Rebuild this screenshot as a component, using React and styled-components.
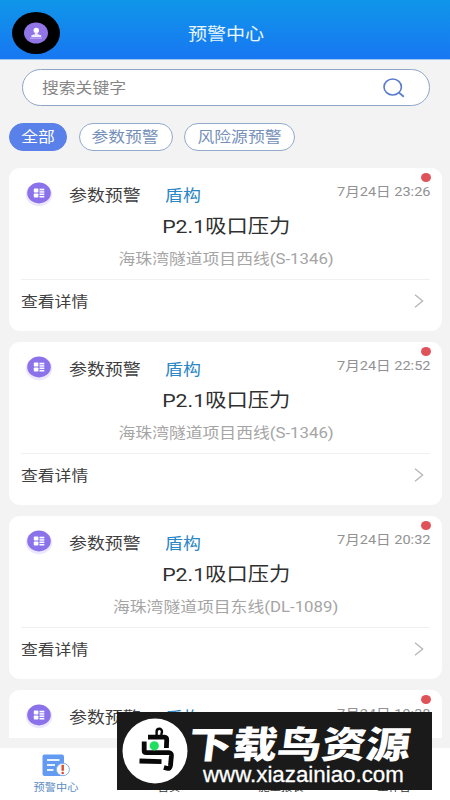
import React from 'react';
import styled, { createGlobalStyle } from 'styled-components';

const alerts = [
	{ id: 1, time: '7月24日 23:26', project: '海珠湾隧道项目西线(S-1346)' },
	{ id: 2, time: '7月24日 22:52', project: '海珠湾隧道项目西线(S-1346)' },
	{ id: 3, time: '7月24日 20:32', project: '海珠湾隧道项目东线(DL-1089)' },
	{ id: 4, time: '7月24日 19:38', project: '海珠湾隧道项目西线(S-1346)' },
];

const filters = [
	{ label: '全部', width: 58, active: true },
	{ label: '参数预警', width: 94 },
	{ label: '风险源预警', width: 111 },
];

const tabs = ['预警中心', '首页', '施工报表', '工作台'];

const UserIcon = () => (
	<svg width="48" height="42" viewBox="0 0 48 42">
		<ellipse cx="24" cy="21" rx="24" ry="21" fill="#000" />
		<ellipse cx="24" cy="21" rx="12" ry="10.6" fill="#9175e6" />
		<ellipse cx="24.3" cy="18.4" rx="2.7" ry="2.7" fill="#fff" />
		<path d="M23 20h2.6v2.2l3.6 1.1v1.8H19.4v-1.8l3.6-1.1z" fill="#efeafd" />
		<path d="M18 26.1h12" stroke="#c6b8f5" strokeWidth="1" />
	</svg>
);

const SearchIcon = () => (
	<svg width="22" height="20" viewBox="0 0 22 20" fill="none" stroke="#5a7bc9" strokeWidth="1.6">
		<ellipse cx="9.7" cy="9" rx="8.7" ry="8" />
		<path d="M15.7 14.4l5.1 4.3" strokeWidth="1.8" />
	</svg>
);

const GridIcon = () => (
	<svg width="30" height="27" viewBox="0 0 30 27">
		<ellipse cx="15" cy="13.5" rx="13.2" ry="11.7" fill="#ece7fd" />
		<ellipse cx="15" cy="12" rx="11.8" ry="10.4" fill="#8b72ea" />
		<g fill="#fff">
			<rect x="9.8" y="7.6" width="4.6" height="4" rx="0.8" />
			<rect x="9.8" y="12.5" width="4.6" height="4" rx="0.8" />
			<rect x="15.5" y="7.7" width="4.8" height="1.7" />
			<rect x="15.5" y="10.2" width="4.8" height="1.5" />
			<rect x="15.5" y="12.5" width="4.8" height="1.5" />
			<rect x="15.5" y="14.9" width="4.8" height="1.6" />
		</g>
	</svg>
);

const ChevronIcon = () => (
	<svg width="10" height="14" viewBox="0 0 10 14" fill="none" stroke="#b9b9b9" strokeWidth="1.4">
		<path d="M1 0.8l7.6 6.2L1 13.2" />
	</svg>
);

const AlertTabIcon = () => (
	<svg width="28" height="23" viewBox="0 0 28 23">
		<rect x="0.5" y="0.5" width="21.5" height="21.5" rx="2" fill="#639bf3" />
		<path d="M5 6h12.5M5 11h8M5 16h6.5" stroke="#e9f2ff" strokeWidth="1.9" />
		<ellipse cx="20.9" cy="15.5" rx="6.5" ry="6.2" fill="#fff" stroke="#83acea" strokeWidth="1" />
		<path d="M20.7 10.8v6" stroke="#d94c31" strokeWidth="2.4" />
		<circle cx="20.7" cy="19" r="1.3" fill="#d94c31" />
	</svg>
);

const BirdLogo = () => (
	<svg width="66" height="66" viewBox="0 0 66 66" fill="none">
		<circle cx="33" cy="33" r="32.5" fill="#fff" />
		<g stroke="#080808" strokeWidth="4.8" strokeLinejoin="round">
			<path d="M34.6 17v-3.2c0-4 5.6-4 5.4 0l-.8 3.2" strokeWidth="2.4" />
			<path d="M26 19.2h16.3q2.5.2 2.4 2.8l-.3 8" />
			<path d="M22.2 23.5v9.2q0 2 2.2 2h22.4q2.8 0 2.6 3l-.9 9.8q-.5 3.6-3.6 2.8l-3-.8" />
			<path d="M17.5 43l22 .6" strokeWidth="4.8" />
		</g>
		<circle cx="32.3" cy="27.8" r="4.6" fill="#1ee05e" />
	</svg>
);

const AlertCard = ({ time, project }) => (
	<Card>
		<CardTop>
			<GridIcon />
			<Kind>参数预警</Kind>
			<Machine>盾构</Machine>
			<Meta>
				<UnreadDot />
				<Time>{time}</Time>
			</Meta>
		</CardTop>
		<Title>P2.1吸口压力</Title>
		<Project>{project}</Project>
		<CardFooter>
			<Details>查看详情</Details>
			<ChevronIcon />
		</CardFooter>
	</Card>
);

const App = () => (
	<>
		<GlobalStyle />
		<Screen>
			<Header>
				<Avatar>
					<UserIcon />
				</Avatar>
				<HeaderTitle>预警中心</HeaderTitle>
			</Header>
			<SearchBox>
				<Placeholder>搜索关键字</Placeholder>
				<SearchIcon />
			</SearchBox>
			<Filters>
				{filters.map(({ label, width, active }) => (
					<Chip key={label} $width={width} $active={active}>
						<ChipLabel>{label}</ChipLabel>
					</Chip>
				))}
			</Filters>
			<List>
				{alerts.map((alert) => (
					<AlertCard key={alert.id} {...alert} />
				))}
			</List>
			<TabBar>
				{tabs.map((tab, i) => (
					<Tab key={tab}>
						{i === 0 && <AlertTabIcon />}
						<TabLabel $active={i === 0}>{tab}</TabLabel>
					</Tab>
				))}
			</TabBar>
			<Watermark>
				<BirdLogo />
				<Brand>
					<BrandName>下载鸟资源</BrandName>
					<BrandUrl>www.xiazainiao.com</BrandUrl>
				</Brand>
			</Watermark>
		</Screen>
	</>
);

export default App;

const GlobalStyle = createGlobalStyle`
	* {
		box-sizing: border-box;
	}
	body {
		margin: 0;
		font-family: Roboto, 'Noto Sans CJK SC', sans-serif;
	}
	svg {
		display: block;
		flex-shrink: 0;
	}
`;

const Screen = styled.div`
	position: relative;
	display: flex;
	flex-direction: column;
	width: 450px;
	height: 800px;
	overflow: hidden;
	background: #f3f3f4;
`;

/* Text is drawn a little wider than its natural proportions */
const WideText = styled.span`
	display: block;
	flex-shrink: 0;
	white-space: nowrap;
	transform: scaleX(1.12);
	transform-origin: left center;
`;

const Header = styled.header`
	display: grid;
	grid-template-columns: 60px 1fr 60px;
	align-items: center;
	height: 60px;
	flex-shrink: 0;
	padding-top: 6px;
	background: linear-gradient(#0f96e9, #1877f2);
	border-bottom: 1px solid #9cc5f5;
`;

const Avatar = styled.div`
	padding-left: 12px;
`;

const HeaderTitle = styled(WideText)`
	justify-self: center;
	padding: 2px 0 0 1px;
	color: #e9f6ff;
	font-size: 17px;
	line-height: 24px;
	transform-origin: center;
`;

const SearchBox = styled.div`
	display: flex;
	align-items: center;
	justify-content: space-between;
	height: 37px;
	flex-shrink: 0;
	margin: 9px 20px 0 22px;
	padding: 0 24px 0 19px;
	border: 1px solid #8fa5c8;
	border-radius: 20px;
	background: #fff;
`;

const Placeholder = styled(WideText)`
	padding-bottom: 2px;
	color: #858585;
	font-size: 15px;
`;

const Filters = styled.div`
	display: flex;
	gap: 11.5px;
	padding: 17px 9px;
	flex-shrink: 0;
`;

const Chip = styled.div`
	display: flex;
	align-items: center;
	justify-content: center;
	width: ${({ $width }) => $width}px;
	height: 28px;
	border: 1px solid ${({ $active }) => ($active ? '#5a80ea' : '#92a9cc')};
	border-radius: 15px;
	background: ${({ $active }) => ($active ? '#5a80ea' : '#fff')};
	color: ${({ $active }) => ($active ? '#fff' : '#7590b9')};
`;

const ChipLabel = styled(WideText)`
	padding-bottom: 1px;
	font-size: 15px;
	line-height: 20px;
	transform-origin: center;
`;

const List = styled.main`
	display: flex;
	flex-direction: column;
	gap: 11px;
	height: 570px;
	flex-shrink: 0;
	padding: 0 8px 0 9px;
	overflow: hidden;
`;

const Card = styled.article`
	display: flex;
	flex-direction: column;
	height: 163px;
	flex-shrink: 0;
	padding: 0 12px;
	border-radius: 11px;
	background: #fff;
`;

const CardTop = styled.div`
	display: flex;
	align-items: flex-start;
	height: 45px;
	padding: 13px 0 0 3px;
`;

const Kind = styled(WideText)`
	width: 95px;
	margin: 3px 0 0 15px;
	color: #3f3f3f;
	font-size: 16px;
	line-height: 24px;
`;

const Machine = styled(WideText)`
	margin: 3px 0 0 1px;
	color: #2b86c5;
	font-size: 16px;
	line-height: 24px;
`;

const Meta = styled.div`
	display: flex;
	flex-direction: column;
	align-items: flex-end;
	margin: -8px -1px 0 auto;
`;

const UnreadDot = styled.i`
	width: 10px;
	height: 9px;
	border-radius: 50%;
	background: #e0525a;
`;

const Time = styled(WideText)`
	padding-top: 1px;
	color: #929292;
	font-size: 13px;
	line-height: 18px;
	transform-origin: right center;
`;

const Title = styled(WideText)`
	align-self: center;
	padding-left: 1px;
	color: #303030;
	font-size: 19px;
	line-height: 27px;
	transform-origin: center;
`;

const Project = styled(WideText)`
	align-self: center;
	height: 39px;
	padding: 7px 0 0 1px;
	color: #a5a5a5;
	font-size: 15px;
	line-height: 24px;
	transform-origin: center;
`;

const CardFooter = styled.div`
	display: flex;
	align-items: center;
	justify-content: space-between;
	height: 42px;
	padding-right: 6px;
	border-top: 1px solid #f0f0f0;
`;

const Details = styled(WideText)`
	color: #3f3f3f;
	font-size: 15px;
`;

const TabBar = styled.nav`
	display: grid;
	grid-template-columns: repeat(4, 1fr);
	height: 52px;
	margin-top: auto;
	background: #fff;
`;

const Tab = styled.div`
	display: flex;
	flex-direction: column;
	align-items: center;
	justify-content: flex-end;
	padding-bottom: 4px;
`;

const TabLabel = styled(WideText)`
	margin-top: 3px;
	color: ${({ $active }) => ($active ? '#5d8cc2' : '#333')};
	font-size: 10px;
	line-height: 16px;
	transform-origin: center;
`;

const Watermark = styled.div`
	position: absolute;
	left: 117px;
	top: 712px;
	display: flex;
	align-items: center;
	width: 315px;
	height: 78px;
	padding-left: 5px;
	background: #1a1a1a;
	color: #fff;
`;

const Brand = styled.div`
	display: flex;
	flex-direction: column;
	align-items: flex-start;
	padding-top: 8px;
`;

const BrandName = styled(WideText)`
	font-size: 37px;
	font-weight: 900;
	line-height: 40px;
	margin-left: 1px;
	font-family: 'Noto Sans CJK SC', sans-serif;
	transform: scaleX(1.2) skewX(-6deg);
`;

const BrandUrl = styled.span`
	margin-left: 15px;
	font-family: 'Liberation Sans', sans-serif;
	font-size: 22.3px;
	line-height: 26px;
	-webkit-text-stroke: 0.3px #fff;
`;
